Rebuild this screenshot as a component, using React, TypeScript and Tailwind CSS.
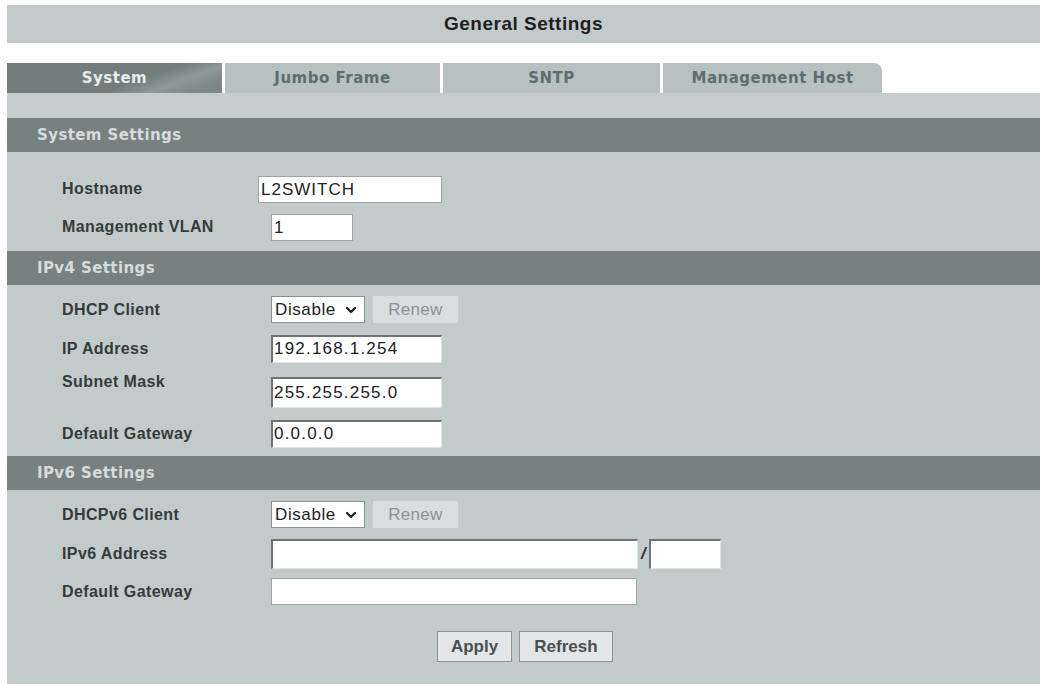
import { ChevronDown } from "lucide-react";

const labelCls = "w-[209px] shrink-0 font-['Liberation_Sans',Arial,sans-serif] text-[16px] font-bold tracking-[0.4px] text-[#333b3b]";
const inputCls = "h-[28px] bg-white border-t-2 border-l-2 border-b border-r border-t-[#6e7272] border-l-[#6e7272] border-b-[#dfe3e3] border-r-[#dfe3e3] px-[1px] font-['Liberation_Sans',Arial,sans-serif] text-[17px] tracking-[1.2px] text-[#222] leading-[24px]";
const btnCls = "h-[31px] bg-[#e3e6e6] border border-[#8e9393] flex items-center justify-center font-['Liberation_Sans',Arial,sans-serif] text-[17px] font-bold text-[#4a4f4f]";

function SectionHeader(props: { title: string }) {
    return (
        <div className="h-[34px] bg-[#77817f] flex items-center pl-[30px] font-['DejaVu_Sans',Verdana,sans-serif] text-[15px] font-bold tracking-[0.4px] text-[#d6dcdb]">
            {props.title}
        </div>
    );
}

function TextBox(props: { value?: string; w: string }) {
    return <div className={`${inputCls} ${props.w}`}>{props.value}</div>;
}

function SelectRenew() {
    return (
        <div className="flex items-center gap-[8px]">
            <div className="h-[27px] w-[94px] bg-white border border-[#8a8f8f] flex items-center justify-between pl-[3px] pr-[5px] font-['Liberation_Sans',Arial,sans-serif] text-[17px] tracking-[0.6px] text-[#222]">
                <span>Disable</span>
                <ChevronDown size={16} strokeWidth={3.5} className="text-[#222]" />
            </div>
            <div className="h-[27px] w-[85px] bg-[#d8dddd] flex items-center justify-center font-['Liberation_Sans',Arial,sans-serif] text-[17px] tracking-[0.3px] text-[#8c9393]">
                Renew
            </div>
        </div>
    );
}

function Row(props: { label: string; h: string; children: React.ReactNode }) {
    return (
        <div className={`flex items-center pl-[55px] ${props.h}`}>
            <div className={labelCls}>{props.label}</div>
            {props.children}
        </div>
    );
}

function Tab(props: { label: string; active?: boolean; w: string; last?: boolean }) {
    if (props.active) {
        return (
            <div className={`${props.w} h-[30px] bg-[linear-gradient(160deg,#737e7c_60%,#8e9896_75%,#7d8886_90%)] flex items-center justify-center font-['DejaVu_Sans',Verdana,sans-serif] text-[15px] font-bold tracking-[0.5px] text-[#e8eceb]`}>
                {props.label}
            </div>
        );
    }
    return (
        <div className={`${props.w} h-[30px] bg-[#b7c1bf] flex items-center justify-center font-['DejaVu_Sans',Verdana,sans-serif] text-[15px] font-bold tracking-[0.5px] text-[#5a6e6e] ${props.last ? "rounded-tr-[8px]" : ""}`}>
            {props.label}
        </div>
    );
}

export default function App() {
    return (
        <div className="w-[1046px] h-[687px] bg-white pt-[5px] pl-[7px] overflow-hidden">
            <div className="w-[1033px]">
                <div className="h-[38px] bg-[#c3cbca] flex items-center justify-center font-['Liberation_Sans',Arial,sans-serif] text-[19px] font-bold tracking-[0.5px] text-[#1c1f1f]">
                    General Settings
                </div>

                <div className="mt-[20px] flex items-end gap-[3px]">
                    <Tab label="System" active w="w-[215px]" />
                    <Tab label="Jumbo Frame" w="w-[215px]" />
                    <Tab label="SNTP" w="w-[217px]" />
                    <Tab label="Management Host" w="w-[219px]" last />
                </div>

                <div className="bg-[#c3cbca] h-[591px]">
                    <div className="h-[25px] bg-[#c5cdcc]" />
                    <SectionHeader title="System Settings" />
                    <div className="pt-[18px] pb-[5px]">
                        <Row label="Hostname" h="h-[38px]">
                            <div className="-ml-[13px]">
                                <div className="h-[27px] w-[184px] bg-white border border-[#9ea3a3] px-[2px] font-['Liberation_Sans',Arial,sans-serif] text-[17px] tracking-[1px] text-[#222] leading-[25px]">
                                    L2SWITCH
                                </div>
                            </div>
                        </Row>
                        <Row label="Management VLAN" h="h-[38px]">
                            <div className="h-[27px] w-[82px] bg-white border border-[#9ea3a3] px-[2px] font-['Liberation_Sans',Arial,sans-serif] text-[17px] text-[#222] leading-[25px]">
                                1
                            </div>
                        </Row>
                    </div>

                    <SectionHeader title="IPv4 Settings" />
                    <div className="pt-[5px] pb-[2px]">
                        <Row label="DHCP Client" h="h-[39px]">
                            <SelectRenew />
                        </Row>
                        <Row label="IP Address" h="h-[40px]">
                            <TextBox value="192.168.1.254" w="w-[171px]" />
                        </Row>
                        <div className="flex pl-[55px] h-[45px]">
                            <div className={`${labelCls} pt-[1px]`}>Subnet Mask</div>
                            <div className="pt-[8px]">
                                <TextBox value="255.255.255.0" w="w-[171px] h-[31px] leading-[28px]" />
                            </div>
                        </div>
                        <Row label="Default Gateway" h="h-[40px]">
                            <TextBox value="0.0.0.0" w="w-[171px]" />
                        </Row>
                    </div>

                    <SectionHeader title="IPv6 Settings" />
                    <div className="pt-[5px]">
                        <Row label="DHCPv6 Client" h="h-[39px]">
                            <SelectRenew />
                        </Row>
                        <Row label="IPv6 Address" h="h-[40px]">
                            <TextBox w="w-[367px] h-[30px]" />
                            <span className="mx-[3px] font-['Liberation_Sans',Arial,sans-serif] text-[17px] italic font-bold text-[#333]">/</span>
                            <TextBox w="w-[72px] h-[30px]" />
                        </Row>
                        <Row label="Default Gateway" h="h-[35px]">
                            <div className="h-[27px] w-[366px] bg-white border border-[#9ea3a3]" />
                        </Row>
                        <div className="flex justify-center gap-[7px] mt-[22px] pl-[3px]">
                            <div className={`${btnCls} w-[75px]`}>Apply</div>
                            <div className={`${btnCls} w-[94px]`}>Refresh</div>
                        </div>
                    </div>
                </div>
            </div>
        </div>
    );
}
